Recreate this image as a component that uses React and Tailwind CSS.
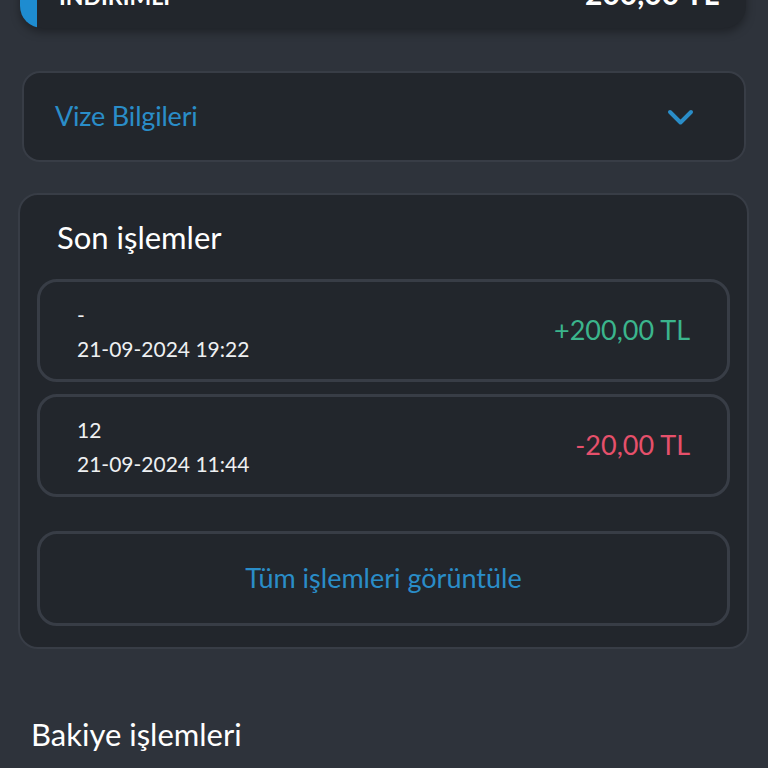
const transactions = [
  { note: "-", date: "21-09-2024 19:22", amount: "+200,00 TL", color: "text-[#3bb58c]" },
  { note: "12", date: "21-09-2024 11:44", amount: "-20,00 TL", color: "text-[#e6506b]" },
];

export default function App() {
  return (
    <div
      className="bg-[#2e333b] min-h-screen h-[768px] overflow-hidden text-white"
      style={{ fontFamily: "Lato, 'Open Sans', sans-serif" }}
    >
      {/* Discount card (scrolled off the top) */}
      <div className="mx-[20px] w-[726px] -mt-[52px] h-[80px] rounded-[22px] bg-[#22262c] shadow-[0_4px_10px_rgba(0,0,0,0.35)] overflow-hidden flex">
        <div className="w-[17px] bg-[#1e8cd0] rounded-bl-[22px]" />
        <div className="flex-1 flex items-end justify-between pl-[22px] pr-[27px] pb-[20px]">
          <span className="text-[23px] font-bold leading-none">İNDİRİMLİ</span>
          <span className="text-[30px] font-bold leading-none">200,00 TL</span>
        </div>
      </div>

      {/* Vize */}
      <div className="ml-[22px] w-[724px] mt-[43px] h-[91px] rounded-[18px] bg-[#22262c] border-2 border-[#383d46] flex items-center justify-between pl-[31px] pr-[50px]">
        <span className="text-[27px] text-[#2a8dc8] tracking-[-0.2px]">Vize Bilgileri</span>
        <svg width="27" height="18" viewBox="0 0 27 18" fill="none">
          <path d="M3 4l10.5 10.5L24 4" stroke="#2a8dc8" strokeWidth="4" strokeLinecap="round" strokeLinejoin="round" />
        </svg>
      </div>

      {/* Son işlemler */}
      <div className="ml-[18px] w-[731px] mt-[31px] rounded-[20px] bg-[#22262c] border-2 border-[#383d46] px-[17px] pt-[22px] pb-[21px]">
        <h2 className="text-[31px] leading-[40px] pl-[20px] mb-[22px]">Son işlemler</h2>
        <div className="flex flex-col gap-[12px]">
          {transactions.map((t) => (
            <div
              key={t.date}
              className="h-[103px] rounded-[20px] border-[3px] border-[#383d46] flex items-center justify-between pl-[37px] pr-[37px]"
            >
              <div className="flex flex-col text-[21px] leading-[34px] text-[#eef0f2] pt-[2px]">
                <span>{t.note}</span>
                <span>{t.date}</span>
              </div>
              <span className={`text-[27px] ${t.color}`}>{t.amount}</span>
            </div>
          ))}
        </div>
        <div className="mt-[34px] h-[95px] rounded-[20px] border-[3px] border-[#383d46] flex items-center justify-center">
          <span className="text-[27px] text-[#2a8dc8]">Tüm işlemleri görüntüle</span>
        </div>
      </div>

      <h2 className="ml-[31px] mt-[65px] text-[31px] leading-[40px]">Bakiye işlemleri</h2>
    </div>
  );
}
